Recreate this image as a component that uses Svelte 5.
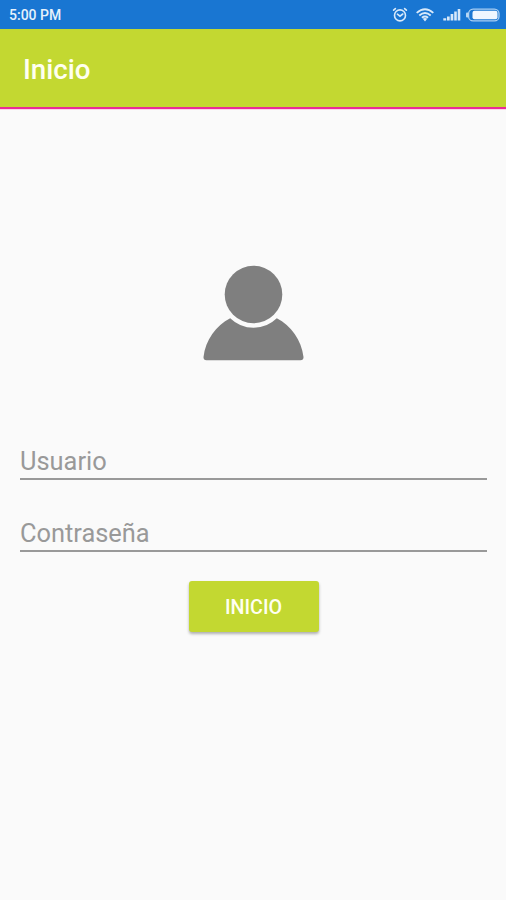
<script>
  let user = $state('');
  let password = $state('');
</script>

<div class="screen">
  <div class="status">
    <span class="time">5:00 PM</span>
    <svg class="alarm" width="16" height="16" viewBox="0 0 16 16" fill="none" stroke="#d8e9fa" stroke-width="1.6" stroke-linecap="round">
      <circle cx="8" cy="8.4" r="5.5" />
      <path d="M1.6 3.2 3.4 1.6M14.4 3.2 12.6 1.6M5.4 7.2 8 9.2 10.8 7" />
    </svg>
    <svg class="wifi" width="18" height="14" viewBox="0 0 18 14" fill="none" stroke="#d8e9fa" stroke-width="1.9">
      <path d="M.7 4.9Q9-2.3 17.3 4.9M3.3 7.4Q9 2.6 14.7 7.4M5.9 9.8Q9 7.4 12.1 9.8" />
      <path d="M6.8 10.8 9 13.4 11.2 10.8Q9 9.4 6.8 10.8Z" fill="#d8e9fa" stroke="none" />
    </svg>
    <svg class="signal" width="18" height="13" viewBox="0 0 18 13" fill="#d6e8fa">
      <path d="M.3 10.2h2.9v2.3H.3zM4 8.4h2.7v4.1H4zM7.6 6h2.7v6.5H7.6zM11.2 3.5h2.6v9h-2.6zM14.7 1h2.6v11.5h-2.6z" />
    </svg>
    <svg class="battery" width="34" height="14" viewBox="0 0 34 14">
      <rect x="2.6" y="1.1" width="30.4" height="11.8" rx="4.5" fill="none" stroke="#a9cef2" stroke-width="1.3" />
      <rect x="6.5" y="2.8" width="25" height="8.4" rx="2" fill="#eef6ff" />
      <rect x="0" y="4.5" width="2.6" height="5" rx="1" fill="#b7d7f5" />
    </svg>
  </div>
  <header><h1>Inicio</h1></header>
  <main>
    <svg class="avatar" width="102" height="97" viewBox="0 0 102 97" fill="#7f7f7f">
      <circle cx="50.5" cy="29.5" r="28.8" />
      <path d="M27.2 53.2Q37 62.7 50.5 62.7T73.8 53.2C88 60.5 98.5 75 100.5 92Q100.7 95.2 97.5 95.2H3.5Q.3 95.2 .5 92C2.5 75 13 60.5 27.2 53.2Z" />
    </svg>
    <input class="user" type="text" placeholder="Usuario" bind:value={user} />
    <input class="password" type="password" placeholder="Contraseña" bind:value={password} />
    <button type="button">INICIO</button>
  </main>
</div>

<style>
  .screen {
    width: 100%;
    height: 900px;
    display: flex;
    flex-direction: column;
    background: #fafafa;
    font-family: Roboto, sans-serif;
  }
  .status {
    box-sizing: border-box;
    height: 29px;
    flex: none;
    display: flex;
    align-items: center;
    padding: 0 6px 0 9px;
    background: #1976d2;
  }
  .time {
    margin-right: auto;
    color: #e6f1fc;
    font-size: 14px;
    font-weight: 500;
    line-height: 20px;
    padding-top: 1px;
  }
  .alarm { margin-right: 8px; }
  .wifi { margin-right: 9px; }
  .signal { margin-right: 5px; }
  header {
    box-sizing: border-box;
    height: 80px;
    flex: none;
    display: flex;
    align-items: center;
    padding: 3px 23px 0;
    background: #c3d831;
    background-clip: padding-box;
    border-bottom: 2px solid #ea2a98;
    box-shadow: 0 1px 0 #fbd3e8;
  }
  h1 {
    margin: 0;
    color: #fffff0;
    font-size: 27.7px;
    font-weight: 500;
    line-height: 36px;
  }
  main {
    display: flex;
    flex-direction: column;
    align-items: center;
    padding: 156px 19px 0 20px;
  }
  input {
    box-sizing: border-box;
    width: 100%;
    height: 38px;
    padding: 2px 0 0;
    border: 0;
    border-bottom: 2px solid #999;
    border-radius: 0;
    outline: 0;
    background: none;
    color: #333;
    font: 400 25.4px/34px Roboto, sans-serif;
  }
  input::placeholder {
    color: #999;
    opacity: 1;
  }
  .user { margin-top: 80px; }
  .password { margin-top: 34px; }
  button {
    width: 130px;
    height: 51px;
    margin-top: 29px;
    padding: 2px 0 0;
    border: 0;
    border-radius: 3px;
    background: #c3d831;
    box-shadow: 0 2px 3px rgba(0, 0, 0, 0.3);
    color: #fffff0;
    font: 500 19.7px/24px Roboto, sans-serif;
  }
</style>
